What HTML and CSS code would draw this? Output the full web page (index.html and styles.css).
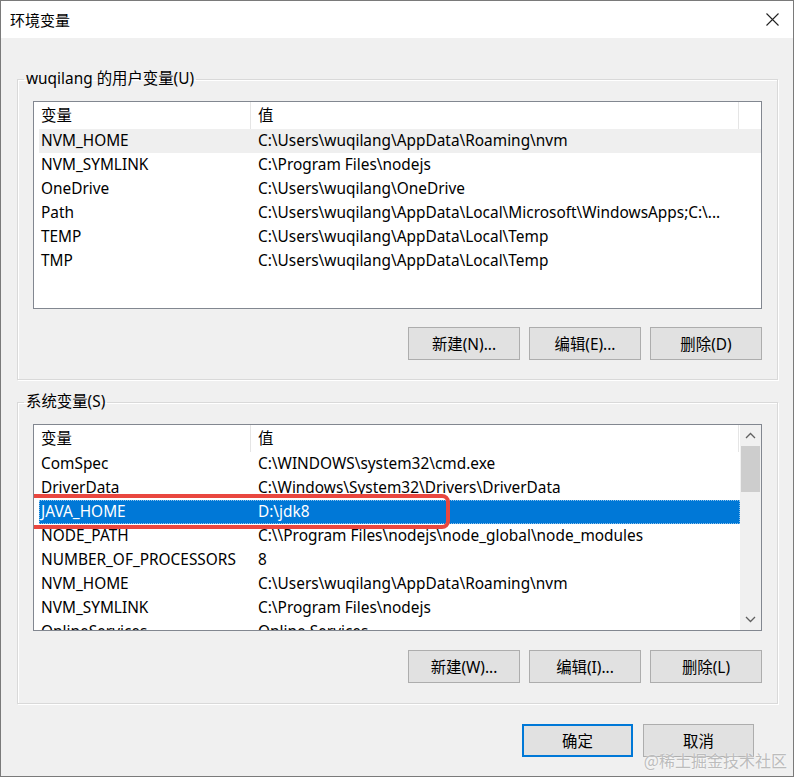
FILE: index.html
```html
<!DOCTYPE html>
<html>
<head>
    <meta charset="UTF-8" />
    <title>环境变量</title>
    <link rel="stylesheet" href="styles.css">
</head>
<body>

    <div class="window">
        <div class="titlebar">
            <span class="title">环境变量</span>
            <svg class="close" width="13" height="13" viewBox="0 0 13 13">
                <path d="M0.5 0.5 L12.5 12.5 M12.5 0.5 L0.5 12.5" stroke="#222" stroke-width="1.1" fill="none" />
            </svg>
        </div>

        <div class="content">
            <fieldset class="group">
                <legend>wuqilang 的用户变量(U)</legend>
                <div class="list list-user">
                    <div class="rows">
                        <div class="list-head"><div>变量</div><div>值</div></div>
                        <div class="row hover"><div>NVM_HOME</div><div>C:\Users\wuqilang\AppData\Roaming\nvm</div></div>
                        <div class="row"><div>NVM_SYMLINK</div><div>C:\Program Files\nodejs</div></div>
                        <div class="row"><div>OneDrive</div><div>C:\Users\wuqilang\OneDrive</div></div>
                        <div class="row"><div>Path</div><div>C:\Users\wuqilang\AppData\Local\Microsoft\WindowsApps;C:\...</div></div>
                        <div class="row"><div>TEMP</div><div>C:\Users\wuqilang\AppData\Local\Temp</div></div>
                        <div class="row"><div>TMP</div><div>C:\Users\wuqilang\AppData\Local\Temp</div></div>
                    </div>
                </div>
                <div class="btns">
                    <button class="btn">新建(N)...</button>
                    <button class="btn">编辑(E)...</button>
                    <button class="btn">删除(D)</button>
                </div>
            </fieldset>

            <fieldset class="group group-sys">
                <legend>系统变量(S)</legend>
                <div class="list list-sys">
                    <div class="rows">
                        <div class="list-head"><div>变量</div><div>值</div></div>
                        <div class="row"><div>ComSpec</div><div>C:\WINDOWS\system32\cmd.exe</div></div>
                        <div class="row"><div>DriverData</div><div>C:\Windows\System32\Drivers\DriverData</div></div>
                        <div class="row selected">
                            <div>JAVA_HOME</div><div>D:\jdk8</div>
                            <span class="mark"></span>
                        </div>
                        <div class="row"><div>NODE_PATH</div><div>C:\\Program Files\nodejs\node_global\node_modules</div></div>
                        <div class="row"><div>NUMBER_OF_PROCESSORS</div><div>8</div></div>
                        <div class="row"><div>NVM_HOME</div><div>C:\Users\wuqilang\AppData\Roaming\nvm</div></div>
                        <div class="row"><div>NVM_SYMLINK</div><div>C:\Program Files\nodejs</div></div>
                        <div class="row"><div>OnlineServices</div><div>Online Services</div></div>
                    </div>
                    <div class="vscroll">
                        <div class="arrow">
                            <svg width="11" height="7" viewBox="0 0 11 7"><path d="M1 6 L5.5 1.5 L10 6" stroke="#606060" stroke-width="1.3" fill="none" /></svg>
                        </div>
                        <div class="thumb"></div>
                        <div class="track"></div>
                        <div class="arrow">
                            <svg width="11" height="7" viewBox="0 0 11 7"><path d="M1 1 L5.5 5.5 L10 1" stroke="#606060" stroke-width="1.3" fill="none" /></svg>
                        </div>
                    </div>
                </div>
                <div class="btns">
                    <button class="btn">新建(W)...</button>
                    <button class="btn">编辑(I)...</button>
                    <button class="btn">删除(L)</button>
                </div>
            </fieldset>

            <div class="footer">
                <button class="btn btn-default">确定</button>
                <button class="btn">取消</button>
            </div>
        </div>

        <div class="watermark">@稀土掘金技术社区</div>
    </div>

</body>
</html>
```

FILE: styles.css
```css
body {
    margin: 0;
    background-color: #f0f0f0;
    font-family: "Noto Sans", "Noto Sans CJK SC", sans-serif;
    font-size: 15.4px;
    color: #000000;
}

div.window {
    position: relative;
    width: 794px;
    height: 777px;
    box-sizing: border-box;
    border: 1px solid #7a7a7a;
    background-color: #f0f0f0;
    overflow: hidden;
}

div.titlebar {
    display: flex;
    align-items: center;
    justify-content: space-between;
    height: 37px;
    padding: 0 14px 0 9px;
    background-color: #ffffff;
}

.title {
    font-size: 15px;
    line-height: 20px;
}

div.content {
    padding: 31px 15px 0 16px;
}

fieldset.group {
    margin: 0;
    padding: 12px 15px 19px 15px;
    border: 1px solid #d9d9d9;
    box-shadow: inset 1px 1px 0 #ffffff, 1px 1px 0 #ffffff;
}

fieldset.group legend {
    margin-left: -9px;
    padding: 0 2px;
    line-height: 20px;
}

fieldset.group-sys {
    margin-top: 12px;
    padding-bottom: 20px;
}

div.list {
    display: flex;
    box-sizing: border-box;
    border: 1px solid #828790;
    background-color: #ffffff;
    overflow: hidden;
}

div.list-user {
    height: 208px;
}

div.list-sys {
    height: 207px;
}

div.rows {
    flex: 1;
    padding-left: 5px;
    overflow: hidden;
}

div.list-head, div.row {
    display: grid;
    grid-template-columns: 212px 488px;
    white-space: nowrap;
}

div.list-head {
    height: 27px;
    line-height: 27px;
}

div.list-head div {
    padding-left: 2px;
    border-right: 1px solid #e5e5e5;
}

div.list-head div + div {
    padding-left: 7px;
}

div.row {
    position: relative;
    height: 24px;
    line-height: 24px;
}

div.row div {
    padding-left: 2px;
    overflow: hidden;
}

div.row div + div {
    padding-left: 7px;
}

div.row.hover {
    background-color: #efefef;
}

div.row.selected {
    background-color: #0078d7;
    color: #ffffff;
    outline: 1px dotted rgba(255, 255, 255, 0.55);
    outline-offset: -1px;
}

/* red annotation drawn over the selected row */
span.mark {
    position: absolute;
    left: -12px;
    top: -6px;
    width: 423px;
    height: 35px;
    box-sizing: border-box;
    border: 4px solid #e9473f;
    border-radius: 8px;
}

div.vscroll {
    display: flex;
    flex-direction: column;
    width: 21px;
    background-color: #f0f0f0;
}

div.arrow {
    display: flex;
    align-items: center;
    justify-content: center;
    height: 21px;
}

div.thumb {
    height: 46px;
    margin: 0 1px;
    background-color: #cdcdcd;
}

div.track {
    flex: 1;
}

div.btns {
    display: flex;
    justify-content: flex-end;
    gap: 9px;
    margin-top: 18px;
}

fieldset.group-sys div.btns {
    margin-top: 19px;
}

button.btn {
    width: 112px;
    height: 33px;
    padding: 0;
    border: 1px solid #adadad;
    background-color: #e1e1e1;
    font-family: "Noto Sans", "Noto Sans CJK SC", sans-serif;
    font-size: 15.4px;
    color: #000000;
}

div.footer {
    display: flex;
    justify-content: flex-end;
    gap: 10px;
    margin-top: 20px;
    padding-right: 24px;
}

div.footer button.btn {
    width: 111px;
}

button.btn-default {
    border: 2px solid #0078d7;
}

div.watermark {
    position: absolute;
    right: 6px;
    bottom: 4px;
    font-family: "Noto Sans CJK SC", sans-serif;
    font-size: 16px;
    color: #bcbcbc;
    text-shadow: 0 0 2px #ffffff;
}
```
